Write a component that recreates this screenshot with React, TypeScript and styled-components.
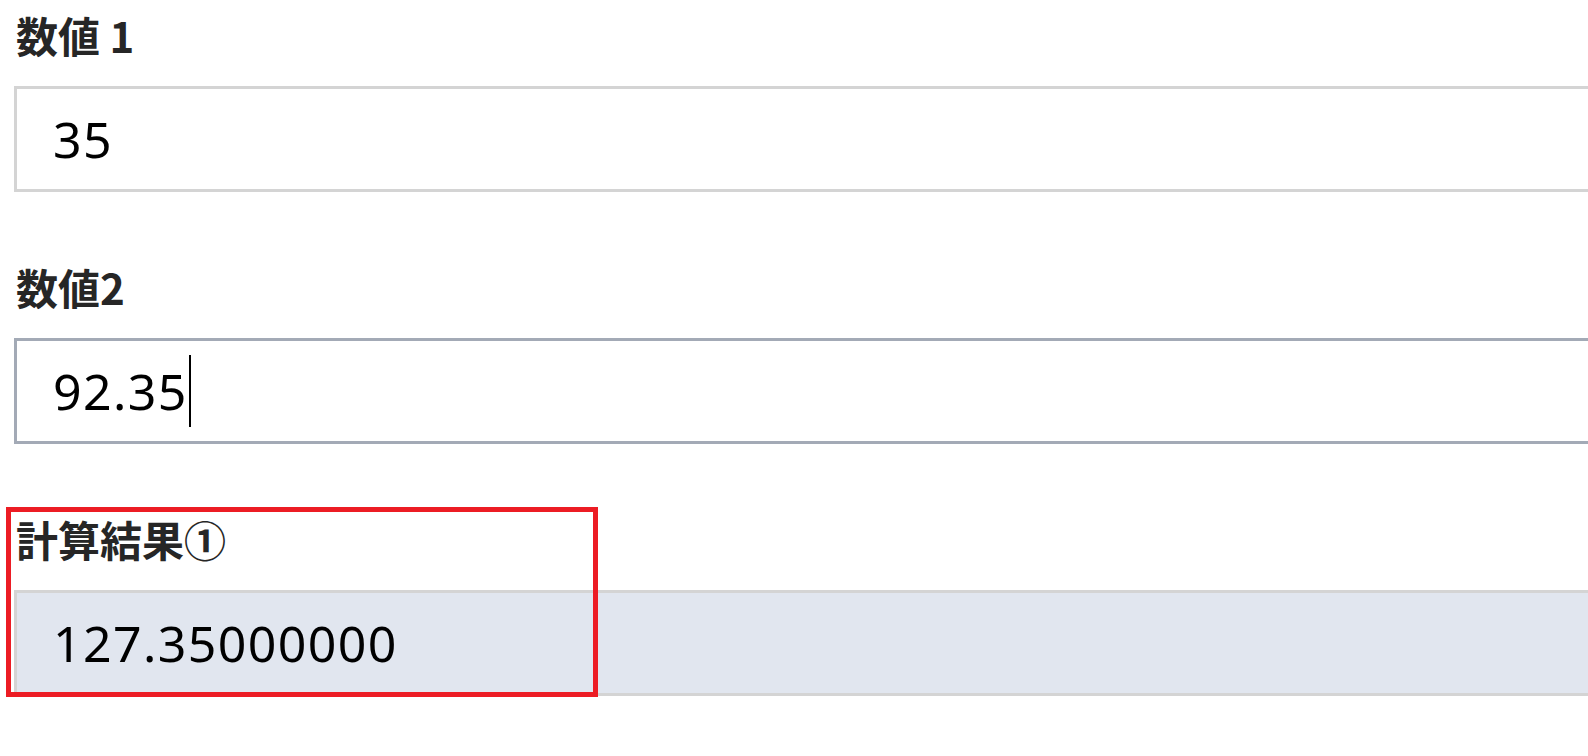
import styled, { createGlobalStyle } from 'styled-components'

const GlobalStyle = createGlobalStyle`
    html, body {
        margin: 0;
        padding: 0;
        background: #ffffff;
        overflow: hidden;
    }
`

const Page = styled.div`
    width: 1588px;
    height: 756px;
    padding: 10px 0 0 14px;
    box-sizing: border-box;
    display: flex;
    flex-direction: column;
    gap: 70px;
    font-family: "Noto Sans", "Noto Sans CJK JP", sans-serif;
`

const Group = styled.div`
    position: relative;
    display: flex;
    flex-direction: column;
    gap: 26px;
`

const Label = styled.div`
    margin-left: 2px;
    height: 50px;
    line-height: 50px;
    font-family: "Noto Sans CJK JP", sans-serif;
    font-size: 42px;
    font-weight: 700;
    color: #262626;
    white-space: nowrap;
`

const Field = styled.div<{ $border?: string; $bg?: string }>`
    width: 1620px;
    height: 106px;
    box-sizing: border-box;
    border: 3px solid ${p => p.$border ?? '#d4d4d4'};
    background: ${p => p.$bg ?? '#ffffff'};
    padding-left: 36px;
    display: flex;
    align-items: center;
    font-size: 50px;
    letter-spacing: 1.4px;
    color: #000000;
`

const Caret = styled.span`
    display: inline-block;
    width: 2px;
    height: 72px;
    margin-left: 1px;
    background: #000000;
`

const Highlight = styled.div`
    position: absolute;
    left: -8px;
    top: -7px;
    width: 592px;
    height: 190px;
    box-sizing: border-box;
    border: 5px solid #ec1c24;
    pointer-events: none;
`

const App = () => {
    return (
        <>
            <GlobalStyle />
            <Page>
                <Group>
                    <Label>数値 1</Label>
                    <Field>35</Field>
                </Group>
                <Group>
                    <Label>数値2</Label>
                    <Field $border="#a3aab6">92.35<Caret /></Field>
                </Group>
                <Group>
                    <Label>計算結果①</Label>
                    <Field $bg="#e1e6ef">127.35000000</Field>
                    <Highlight />
                </Group>
            </Page>
        </>
    )
}

export default App
